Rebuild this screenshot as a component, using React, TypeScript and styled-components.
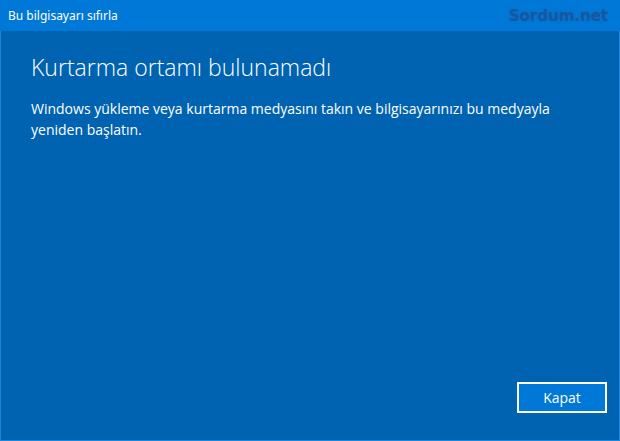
import React from "react";
import styled, { createGlobalStyle } from "styled-components";

const Global = createGlobalStyle`
  html, body {
    margin: 0;
    padding: 0;
    background: #0063b1;
  }
  * { box-sizing: border-box; }
`;

const Window = styled.div`
  width: 620px;
  height: 441px;
  display: flex;
  flex-direction: column;
  background: #0063b1;
  border: 1px solid #1c86da;
  border-top: none;
  font-family: "Noto Sans", "Open Sans", sans-serif;
  color: #ffffff;
`;

const TitleBar = styled.div`
  height: 31px;
  flex: none;
  display: flex;
  align-items: center;
  justify-content: space-between;
  background: #0078d7;
  margin: 0 -1px;
  padding: 0 12px 0 8px;
`;

const TitleText = styled.span`
  font-size: 12px;
  color: #ffffff;
`;

const Watermark = styled.span`
  font-family: "DejaVu Sans", sans-serif;
  font-weight: bold;
  font-size: 15px;
  color: #1358a2;
  text-shadow: 0 0 2px #1766b4;
`;

const Content = styled.div`
  flex: 1;
  display: flex;
  flex-direction: column;
  padding: 20px 12px 0 30px;
`;

const Heading = styled.h1`
  margin: 0;
  font-family: "Open Sans", sans-serif;
  font-weight: 300;
  font-size: 23px;
  line-height: 32px;
`;

const Message = styled.p`
  margin: 15px 0 0 0;
  width: 570px;
  font-family: "Open Sans", sans-serif;
  font-size: 14px;
  line-height: 21px;
`;

const Footer = styled.div`
  margin-top: auto;
  display: flex;
  justify-content: flex-end;
  padding: 0 0 27px 0;
`;

const Button = styled.button`
  width: 90px;
  height: 31px;
  background: #0078d7;
  border: 2px solid #ffffff;
  color: #ffffff;
  font-family: "Open Sans", sans-serif;
  font-size: 14px;
  padding: 0;
`;

export default function App() {
  return (
    <>
      <Global />
      <Window>
        <TitleBar>
          <TitleText>Bu bilgisayarı sıfırla</TitleText>
          <Watermark>Sordum.net</Watermark>
        </TitleBar>
        <Content>
          <Heading>Kurtarma ortamı bulunamadı</Heading>
          <Message>
            Windows yükleme veya kurtarma medyasını takın ve bilgisayarınızı bu medyayla yeniden başlatın.
          </Message>
          <Footer>
            <Button>Kapat</Button>
          </Footer>
        </Content>
      </Window>
    </>
  );
}
